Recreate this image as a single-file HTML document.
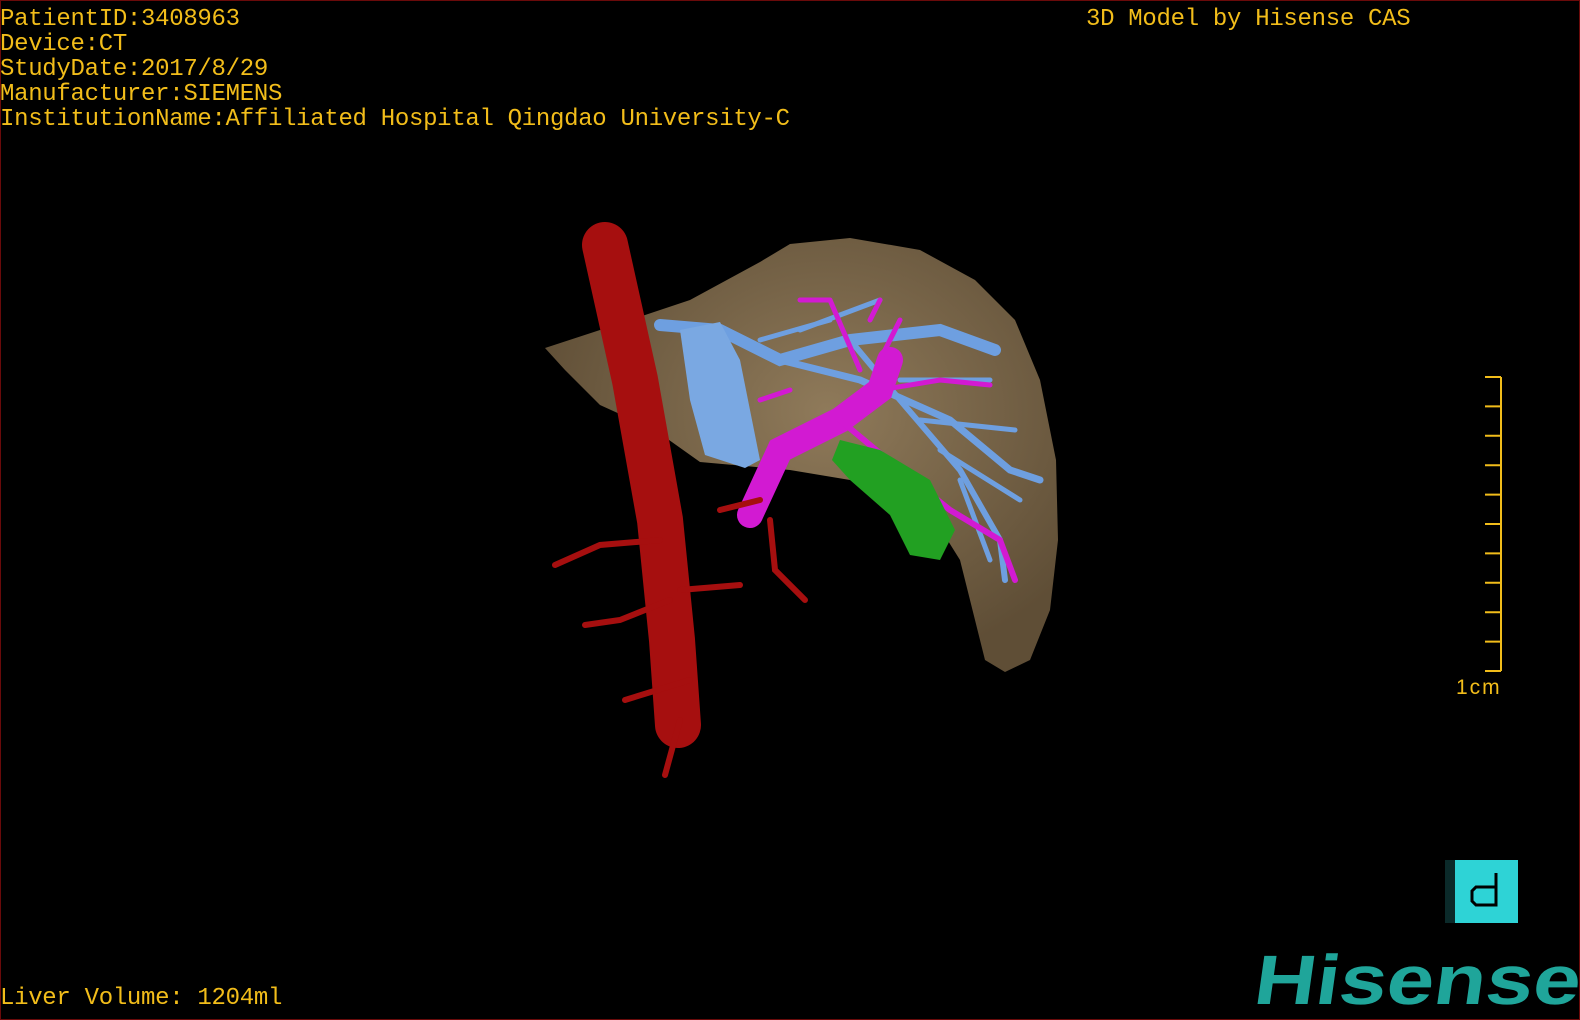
<!DOCTYPE html>
<html><head><meta charset="utf-8"><style>
html,body{margin:0;padding:0;background:#000;width:1580px;height:1020px;overflow:hidden}
.frame{position:absolute;left:0;top:0;width:1578px;height:1018px;border:1px solid #6a0a0a}
.t{position:absolute;font-family:"Liberation Mono",monospace;font-size:24px;color:#f2bd1a;white-space:pre;line-height:25px;letter-spacing:-0.3px}
</style></head><body>
<div class="frame"></div>
<div class="t" style="left:0;top:7px">PatientID:3408963
Device:CT
StudyDate:2017/8/29
Manufacturer:SIEMENS
InstitutionName:Affiliated Hospital Qingdao University-C</div>
<div class="t" style="left:1086px;top:7px">3D Model by Hisense CAS</div>
<div class="t" style="left:0;top:986px">Liver Volume: 1204ml</div>
<svg width="1580" height="1020" style="position:absolute;left:0;top:0">
<defs>
<radialGradient id="lv" cx="0.55" cy="0.4" r="0.6"><stop offset="0" stop-color="#8f7a5a"/><stop offset="1" stop-color="#5f4e36"/></radialGradient>
</defs>
<path d="M545,348 L600,330 L690,300 L760,262 L790,244 L850,238 L920,250 L975,280 L1015,320 L1040,380 L1056,460 L1058,540 L1050,610 L1030,660 L1005,672 L985,660 L975,620 L960,560 L935,520 L880,485 L790,470 L700,462 L655,430 L600,405 L565,370 Z" fill="url(#lv)"/>
<g stroke="#6e9fe0" fill="none" stroke-linecap="round">
<path d="M660,325 L720,330 L780,360 L850,340 L940,330 L995,350" stroke-width="12"/>
<path d="M780,360 L860,380 L950,420 L1010,470 L1040,480" stroke-width="7"/>
<path d="M850,340 L900,400 L960,470 L1000,540 L1005,580" stroke-width="6"/>
<path d="M800,330 L880,300 M900,380 L990,380 M920,420 L1015,430 M940,450 L1020,500 M960,480 L990,560 M760,340 L830,320" stroke-width="5"/>
</g>
<path d="M680,330 L720,322 L740,360 L760,460 L745,468 L705,455 L690,400 Z" fill="#7aa8e2"/>
<g stroke="#d21ad2" fill="none" stroke-linecap="round">
<path d="M750,515 L780,450 L840,420 L880,390 L890,360" stroke-width="26"/>
<path d="M840,420 L900,470 L950,510 L1000,540 L1015,580" stroke-width="6"/>
<path d="M880,390 L940,380 L990,385 M860,370 L830,300 M880,360 L900,320 M790,390 L760,400 M830,300 L800,300 M870,320 L880,300" stroke-width="5"/>
</g>
<path d="M840,440 L880,450 L930,480 L955,530 L940,560 L910,555 L890,515 L850,480 L832,460 Z" fill="#22a022"/>
<g stroke="#a60f0f" fill="none" stroke-linecap="round">
<path d="M605,245 L635,380 L660,520 L672,640 L678,725" stroke-width="46"/>
<path d="M660,540 L600,545 L555,565 M670,600 L620,620 L585,625 M680,590 L740,585 M690,680 L625,700 M680,720 L665,775 M720,510 L760,500 M770,520 L775,570 L805,600" stroke-width="6"/>
</g>
<g stroke="#f2bd1a" stroke-width="2" fill="none">
<path d="M1501,377 V671"/>
<path d="M1485,377H1501M1485,406.4H1501M1485,435.8H1501M1485,465.2H1501M1485,494.6H1501M1485,524H1501M1485,553.4H1501M1485,582.8H1501M1485,612.2H1501M1485,641.6H1501M1485,671H1501"/>
</g>
<text x="1456" y="694" font-family="Liberation Sans,sans-serif" font-size="21" fill="#f2bd1a" letter-spacing="2">1cm</text>
<rect x="1445" y="860" width="10" height="63" fill="#0b2a2a"/>
<rect x="1455" y="860" width="63" height="63" fill="#2ed3d6"/>
<path d="M1496,873 V905 H1476 L1472,901 V891 L1476,887 H1496" stroke="#000" stroke-width="3" fill="none"/>
<text x="1252" y="1004" font-family="Liberation Sans,sans-serif" font-weight="bold" font-size="70" fill="#1fa59a" textLength="326" lengthAdjust="spacingAndGlyphs" transform="skewX(-8) translate(141,0)">Hisense</text>
</svg>
</body></html>
